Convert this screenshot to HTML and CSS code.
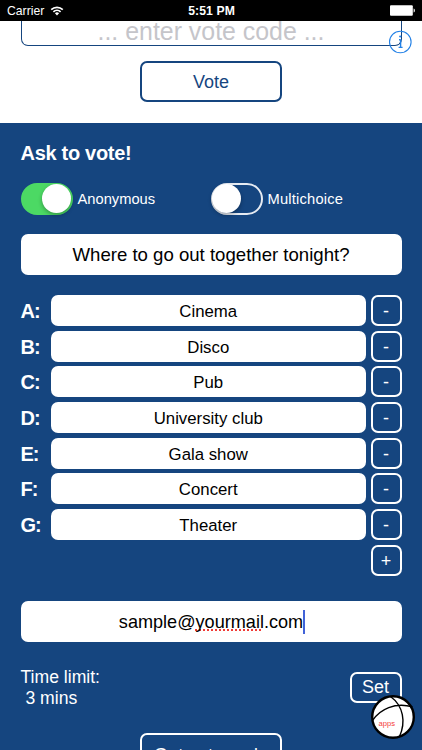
FILE: index.html
```html
<!DOCTYPE html>
<html lang="en">
<head>
    <meta charset="UTF-8">
    <meta name="viewport" content="width=device-width, initial-scale=1.0">
    <title>Vote</title>
    <link rel="stylesheet" href="styles.css">
</head>
<body>
    <header class="status-bar">
        <div class="carrier">
            <span>Carrier</span>
            <svg class="wifi" width="14" height="10" viewBox="0 0 14 10" fill="none" stroke="#fff" stroke-width="1.7">
                <path d="M1.2 3.6a8.4 8.4 0 0 1 11.6 0M3.4 5.9a5.2 5.2 0 0 1 7.2 0"/>
                <path d="M4.9 7.3a3 3 0 0 1 4.2 0L7 9.5z" fill="#fff" stroke="none"/>
            </svg>
        </div>
        <div class="time">5:51 PM</div>
        <div class="power">
            <svg width="26" height="11" viewBox="0 0 26 11" fill="#fff">
                <rect x="0" y="0.3" width="22.8" height="10.4" rx="1"/>
                <path d="M23.6 3.5c1.7.4 1.7 3.6 0 4z"/>
            </svg>
        </div>
    </header>

    <section class="enter">
        <div class="code-input">... enter vote code ...</div>
        <div class="info">
            <svg width="24" height="24" viewBox="0 0 24 24" fill="none" stroke="#2381e6" stroke-width="1.1">
                <circle cx="12.3" cy="12" r="10.8"/>
                <path d="M12.6 9.4v8M11 9.8h1.6M10.6 17.4h4" stroke-width="1.4"/>
                <circle cx="12.2" cy="6.5" r="1.1" fill="#2381e6" stroke="none"/>
            </svg>
        </div>
        <button class="btn btn-vote">Vote</button>
    </section>

    <section class="ask">
        <h1>Ask to vote!</h1>
        <div class="switches">
            <div class="switch-item">
                <span class="switch on"></span>
                <span>Anonymous</span>
            </div>
            <div class="switch-item">
                <span class="switch"></span>
                <span class="wide">Multichoice</span>
            </div>
        </div>

        <div class="field">Where to go out together tonight?</div>

        <div class="options">
            <div class="option"><b>A:</b><span class="answer">Cinema</span><button class="btn btn-small">-</button></div>
            <div class="option"><b>B:</b><span class="answer">Disco</span><button class="btn btn-small">-</button></div>
            <div class="option"><b>C:</b><span class="answer">Pub</span><button class="btn btn-small">-</button></div>
            <div class="option"><b>D:</b><span class="answer">University club</span><button class="btn btn-small">-</button></div>
            <div class="option"><b>E:</b><span class="answer">Gala show</span><button class="btn btn-small">-</button></div>
            <div class="option"><b>F:</b><span class="answer">Concert</span><button class="btn btn-small">-</button></div>
            <div class="option"><b>G:</b><span class="answer">Theater</span><button class="btn btn-small">-</button></div>
            <div class="option add"><button class="btn btn-small">+</button></div>
        </div>

        <div class="field email">sample@<span class="misspelled">yourmail</span>.com<span class="caret"></span></div>

        <div class="limit">
            <div class="limit-text">Time limit:<br>&nbsp;3 mins</div>
            <button class="btn btn-set">Set</button>
        </div>
        <button class="btn btn-get">Get vote code</button>
    </section>

    <div class="ball">
        <svg width="46" height="46" viewBox="0 0 46 46" fill="none" stroke="#000">
            <circle cx="23" cy="23" r="20.8" fill="#fff" stroke-width="2.4"/>
            <path d="M2.5 26.5C10 15 25 8 42.500 12.800M20.500 2.500C33.500 12 36 28 29.500 42.500" stroke-width="1.4"/>
            <text x="8.500" y="32">apps</text>
        </svg>
    </div>
</body>
</html>
```

FILE: styles.css
```css
* {
    box-sizing: border-box;
}
body {
    margin: 0;
    height: 750px;
    overflow: hidden;
    position: relative;
    display: flex;
    flex-direction: column;
    background: #fff;
    font-family: "Liberation Sans", Arial, sans-serif;
}
.status-bar {
    flex: none;
    height: 20.5px;
    background: #000;
    color: #fff;
    padding: 1px 6px 0 7px;
    display: flex;
    align-items: center;
    font-size: 12.2px;
}
.carrier, .power {
    flex: 1;
    display: flex;
    align-items: center;
    gap: 6px;
}
.power {
    justify-content: flex-end;
}
.time {
    font-weight: bold;
    letter-spacing: 0.1px;
}
.enter {
    flex: none;
    height: 102px;
    padding: 0 20.5px;
    display: flex;
    flex-direction: column;
    align-items: center;
    position: relative;
}
.code-input {
    width: 100%;
    height: 25.500px;
    border: 1px solid #15457f;
    border-top: none;
    border-radius: 0 0 7px 7px;
    color: #c5c5ca;
    font-size: 24.9px;
    line-height: 21px;
    text-align: center;
}
.info {
    position: absolute;
    left: 388px;
    top: 9.5px;
    height: 24px;
}
.btn {
    font-family: inherit;
    font-size: 18px;
    color: #fff;
    background: none;
    border: 2px solid #fff;
    border-radius: 7px;
    padding: 0;
}
.btn-vote {
    width: 142px;
    height: 41px;
    margin-top: 15px;
    padding-top: 1px;
    color: #15457f;
    border-color: #15457f;
}
.ask {
    flex: 1;
    background: #15457f;
    color: #fff;
    padding: 18.4px 20.5px 0;
}
h1 {
    margin: 0;
    font-size: 20px;
    line-height: 24px;
    letter-spacing: -0.3px;
}
.switches {
    display: flex;
    margin-top: 18px;
    font-size: 14.7px;
}
.switch-item {
    width: 190px;
    display: flex;
    align-items: center;
    gap: 5px;
}
.wide {
    letter-spacing: 0.2px;
}
.switch {
    width: 52px;
    height: 32px;
    border: 2px solid #e6ebf2;
    border-radius: 16px;
    display: flex;
}
.switch::before {
    content: "";
    width: 29px;
    height: 29px;
    margin: -0.5px;
    border-radius: 50%;
    background: #fff;
    box-shadow: 0 2px 4px rgba(0,0,0,0.3);
}
.switch.on {
    background: #4cd964;
    border-color: #4cd964;
    justify-content: flex-end;
}
.field {
    height: 41px;
    margin-top: 19px;
    background: #fff;
    border-radius: 7px;
    color: #000;
    font-size: 18.6px;
    line-height: 42px;
    text-align: center;
}
.options {
    margin-top: 20px;
    display: flex;
    flex-direction: column;
    gap: 4.7px;
}
.option {
    height: 31px;
    display: flex;
    gap: 5px;
}
.option b {
    width: 25.500px;
    font-size: 20px;
    line-height: 32px;
    letter-spacing: -1px;
}
.answer {
    flex: 1;
    background: #fff;
    border-radius: 7px;
    color: #000;
    font-size: 16.8px;
    line-height: 33px;
    text-align: center;
}
.btn-small {
    width: 31px;
    height: 31px;
    padding-top: 2px;
}
.add {
    justify-content: flex-end;
}
.email {
    margin-top: 25px;
    font-size: 18.1px;
}
.misspelled {
    text-decoration: underline dotted #f03a35 2px;
    text-decoration-skip-ink: none;
    text-underline-offset: 2px;
}
.caret {
    display: inline-block;
    width: 2px;
    height: 24px;
    margin-right: -2px;
    vertical-align: -6px;
    background: #4263d8;
}
.limit {
    margin-top: 25.600px;
    display: flex;
    justify-content: space-between;
}
.limit-text {
    font-size: 17.6px;
    line-height: 20.5px;
}
.btn-set {
    width: 52px;
    height: 31px;
    margin-top: 5px;
}
.btn-get {
    display: block;
    width: 142px;
    height: 41px;
    margin: 25px auto 0;
    padding-top: 2px;
    font-size: 18.4px;
}
.ball {
    position: absolute;
    left: 369.500px;
    top: 693.500px;
}
.ball text {
    fill: #f4403c;
    stroke: none;
    font-size: 7.6px;
}
```
